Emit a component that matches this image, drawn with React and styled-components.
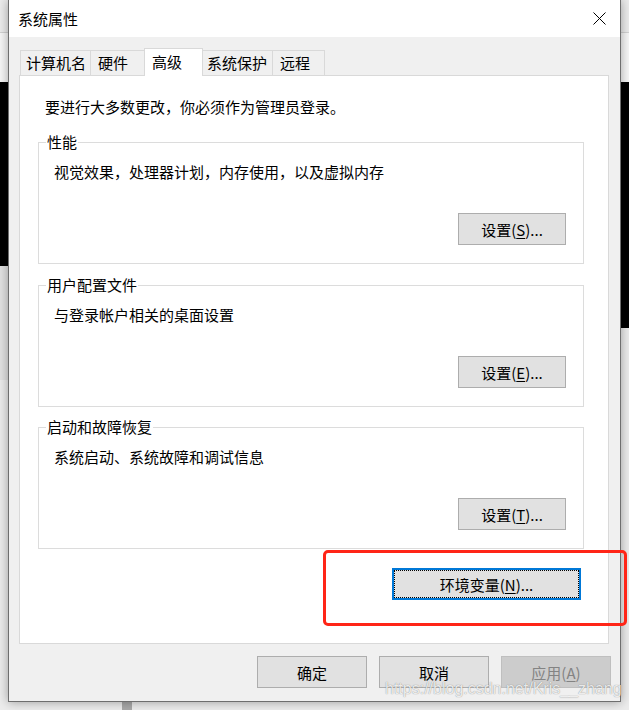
import styled, { createGlobalStyle } from 'styled-components'

const GlobalStyle = createGlobalStyle`
  html, body {
    margin: 0;
    padding: 0;
  }
  body {
    font-family: 'Noto Sans CJK SC', 'Microsoft YaHei', sans-serif;
    font-size: 15px;
    color: #000;
  }
`

// what shows behind the dialog: two black strips and a grey block
const Page = styled.div`
  position: relative;
  width: 629px;
  height: 710px;
  overflow: hidden;
  box-sizing: border-box;
  padding-left: 8px;
  background:
    linear-gradient(#000, #000) 0 82px / 8px 184px no-repeat,
    linear-gradient(#000, #000) 621px 82px / 8px 246px no-repeat,
    linear-gradient(#e2e2e2, #e2e2e2) 0 266px / 8px 114px no-repeat,
    linear-gradient(#d2d2d2, #d2d2d2) 0 32px / 629px 1px no-repeat,
    linear-gradient(#f7f7f7, #f7f7f7) 0 33px / 629px 49px no-repeat,
    linear-gradient(#a9a9a9, #a9a9a9) 122px 702px / 10px 8px no-repeat,
    #ececec;
`

const Window = styled.div`
  width: 613px;
  height: 702px;
  box-sizing: border-box;
  display: flex;
  flex-direction: column;
  background: #f0f0f0;
  border: 1px solid #6e6e6e;
  border-top: none;
  box-shadow: 0 0 10px rgba(0, 0, 0, 0.35);
`

const TitleBar = styled.div`
  height: 37px;
  flex: none;
  display: flex;
  align-items: center;
  justify-content: space-between;
  background: #fff;
  padding-left: 9px;
`

const Title = styled.span`
  line-height: 20px;
  margin-top: 1px;
`

const CloseButton = styled.div`
  width: 41px;
  height: 37px;
  display: flex;
  align-items: center;
  justify-content: center;
`

const Body = styled.div`
  display: flex;
  flex-direction: column;
  padding: 11px 11px 0 10px;
`

const TabRow = styled.div`
  display: flex;
  align-items: flex-end;
  height: 28px;
  padding-left: 1px;
  margin-bottom: -1px;
  position: relative;
  z-index: 1;
`

const Tab = styled.div`
  box-sizing: border-box;
  width: ${(p) => p.$width}px;
  height: ${(p) => (p.$active ? 28 : 26)}px;
  margin-right: -1px;
  padding-left: ${(p) => p.$pad}px;
  border: 1px solid #d9d9d9;
  border-bottom: ${(p) => (p.$active ? 'none' : '1px solid #d9d9d9')};
  background: ${(p) => (p.$active ? '#fff' : '#f0f0f0')};
  line-height: ${(p) => (p.$active ? 25 : 24)}px;
  position: relative;
  z-index: ${(p) => (p.$active ? 2 : 1)};
  white-space: nowrap;
`

const Panel = styled.div`
  background: #fff;
  border: 1px solid #d9d9d9;
  padding: 21px 24px 43px 18px;
  display: flex;
  flex-direction: column;
`

const Intro = styled.div`
  line-height: 20px;
  padding-left: 7px;
  margin-bottom: 15px;
`

const Group = styled.fieldset`
  margin: 0 0 ${(p) => p.$gap}px 0;
  min-width: 0;
  padding: 10px 17px 18px 15px;
  border: 1px solid #dcdcdc;
`

const Legend = styled.legend`
  margin-left: -8px;
  padding: 0 1px;
  line-height: 20px;
`

const GroupText = styled.div`
  line-height: 20px;
`

const ButtonRow = styled.div`
  display: flex;
  justify-content: flex-end;
  margin-top: ${(p) => p.$top || 0}px;
  margin-right: ${(p) => p.$right || 0}px;
`

const Button = styled.div`
  box-sizing: border-box;
  width: ${(p) => p.$width}px;
  height: 32px;
  display: flex;
  align-items: center;
  justify-content: center;
  background: ${(p) => (p.$disabled ? '#cccccc' : '#e1e1e1')};
  border: ${(p) =>
    p.$focused ? '2px solid #0078d7' : p.$disabled ? '1px solid #bfbfbf' : '1px solid #adadad'};
  outline: ${(p) => (p.$focused ? '1px dotted #000' : 'none')};
  outline-offset: -3px;
  color: ${(p) => (p.$disabled ? '#838383' : '#000')};
  white-space: nowrap;
  u {
    text-underline-offset: 2px;
  }
`

const Footer = styled.div`
  display: flex;
  justify-content: flex-end;
  gap: 12px;
  padding-top: 12px;
  margin-right: -2px;
`

// annotation drawn on top of the screenshot
const Highlight = styled.div`
  position: absolute;
  left: 323px;
  top: 550px;
  width: 304px;
  height: 76px;
  box-sizing: border-box;
  border: 3px solid #ff2517;
  border-radius: 5px;
`

const Watermark = styled.div`
  position: absolute;
  left: 385px;
  top: 679px;
  font-family: 'Liberation Sans', Arial, sans-serif;
  font-size: 16px;
  line-height: 20px;
  color: rgba(255, 255, 255, 0.85);
  text-shadow: 0 0 1px rgba(0, 0, 0, 0.5);
  white-space: nowrap;
`

const tabs = [
  { label: '计算机名', width: 71, pad: 5 },
  { label: '硬件', width: 55, pad: 7 },
  { label: '高级', width: 59, pad: 7, active: true },
  { label: '系统保护', width: 71, pad: 4 },
  { label: '远程', width: 53, pad: 7 },
]

const groups = [
  { title: '性能', text: '视觉效果，处理器计划，内存使用，以及虚拟内存', key: 'S', gap: 11 },
  { title: '用户配置文件', text: '与登录帐户相关的桌面设置', key: 'E', gap: 10 },
  { title: '启动和故障恢复', text: '系统启动、系统故障和调试信息', key: 'T', gap: 19 },
]

const CloseIcon = () => (
  <svg width="13" height="13" viewBox="0 0 13 13">
    <path d="M0.5 0.5 L12.5 12.5 M12.5 0.5 L0.5 12.5" stroke="#000" strokeWidth="1" />
  </svg>
)

export default function App() {
  return (
    <Page>
      <GlobalStyle />
      <Window>
        <TitleBar>
          <Title>系统属性</Title>
          <CloseButton>
            <CloseIcon />
          </CloseButton>
        </TitleBar>
        <Body>
          <TabRow>
            {tabs.map((t) => (
              <Tab key={t.label} $width={t.width} $pad={t.pad} $active={t.active}>
                {t.label}
              </Tab>
            ))}
          </TabRow>
          <Panel>
            <Intro>要进行大多数更改，你必须作为管理员登录。</Intro>
            {groups.map((g) => (
              <Group key={g.title} $gap={g.gap}>
                <Legend>{g.title}</Legend>
                <GroupText>{g.text}</GroupText>
                <ButtonRow $top={31}>
                  <Button $width={108}>
                    设置(<u>{g.key}</u>)...
                  </Button>
                </ButtonRow>
              </Group>
            ))}
            <ButtonRow $right={3}>
              <Button $width={189} $focused>
                环境变量(<u>N</u>)...
              </Button>
            </ButtonRow>
          </Panel>
          <Footer>
            <Button $width={110}>确定</Button>
            <Button $width={110}>取消</Button>
            <Button $width={110} $disabled>
              应用(<u>A</u>)
            </Button>
          </Footer>
        </Body>
      </Window>
      <Highlight />
      <Watermark>https://blog.csdn.net/Kris__zhang</Watermark>
    </Page>
  )
}
